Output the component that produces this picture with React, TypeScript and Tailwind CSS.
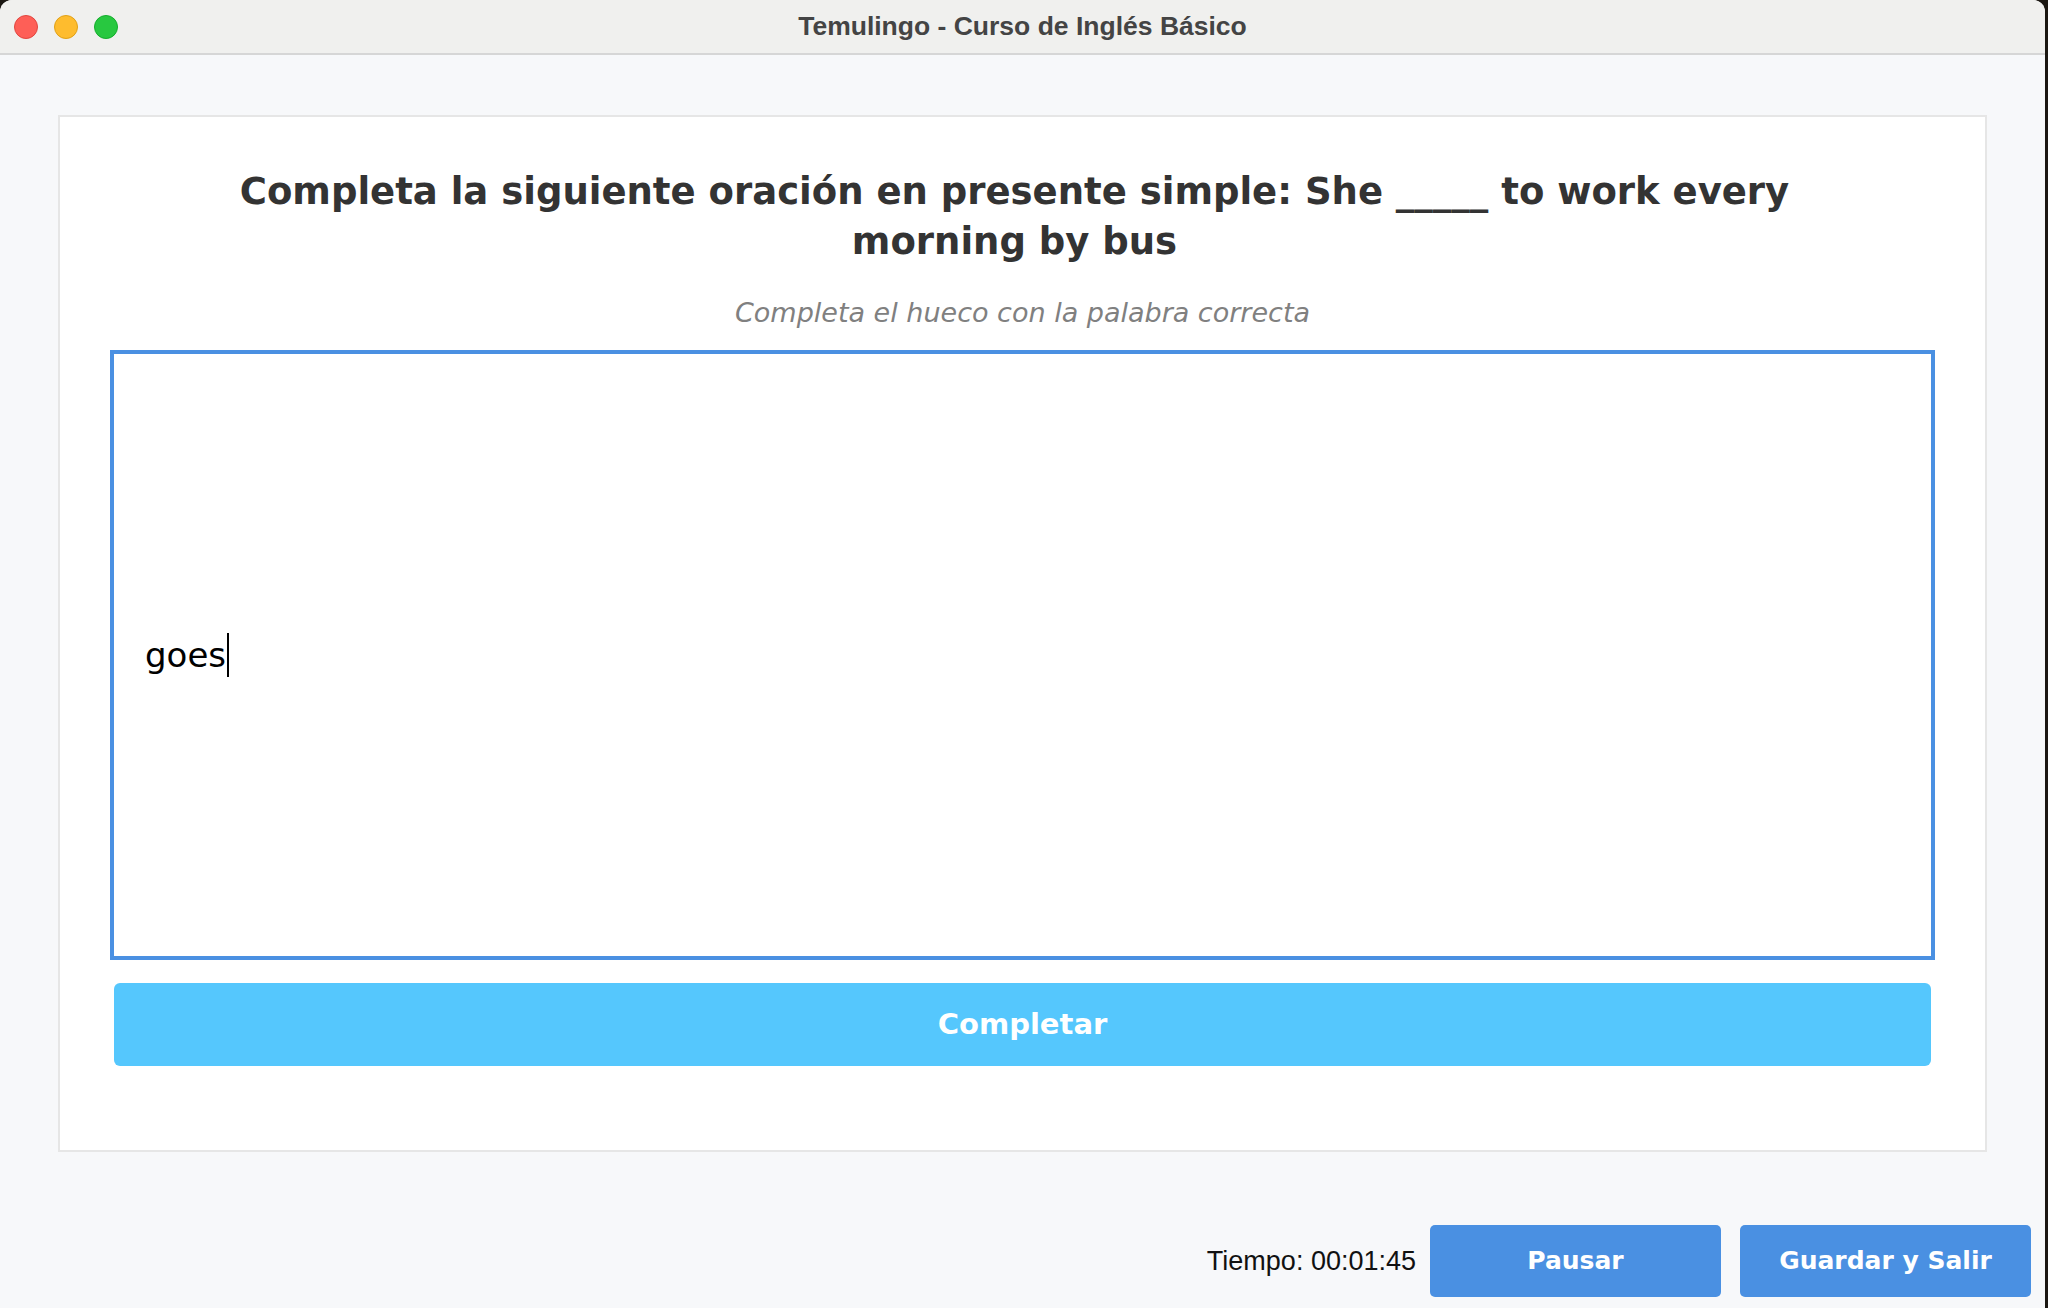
import React from "react";

const dejavu = { fontFamily: '"DejaVu Sans", "Noto Sans", sans-serif' };

function TrafficLights() {
  return (
    <div className="flex items-center gap-[16px] pl-[14px]">
      <span className="size-[24px] rounded-full bg-[#fe5f57] border border-[#e2463f]" />
      <span className="size-[24px] rounded-full bg-[#febc2e] border border-[#e1a116]" />
      <span className="size-[24px] rounded-full bg-[#28c840] border border-[#14ae2c]" />
    </div>
  );
}

export default function App() {
  return (
    <div className="w-[2048px] h-[1308px] bg-[#1b1712] overflow-hidden">
      <div className="w-[2045px] h-[1308px] rounded-t-[12px] overflow-hidden flex flex-col bg-[#f7f8fa]">
        {/* title bar */}
        <div className="relative h-[55px] shrink-0 bg-[#f0f0ee] border-b-2 border-[#d6d6d6] flex items-center">
          <TrafficLights />
          <div
            className="absolute inset-0 flex items-center justify-center text-[26.5px] font-bold text-[#444444]"
            style={{ fontFamily: '"Liberation Sans", Arial, sans-serif' }}
          >
            Temulingo - Curso de Inglés Básico
          </div>
        </div>

        {/* content */}
        <div className="flex-1 flex flex-col px-[58px] pt-[60px]" style={dejavu}>
          <div className="h-[1037px] bg-white border-2 border-[#e6e6e6] flex flex-col px-[50px] pt-[50px]">
            <h1 className="max-w-[1620px] mx-auto pr-[16px] text-center text-[37px] leading-[50px] font-bold text-[#333333]">
              Completa la siguiente oración en presente simple: She _____ to work every morning by bus
            </h1>
            <p className="mt-[29px] text-center text-[27px] leading-[34px] italic text-[#808080]">
              Completa el hueco con la palabra correcta
            </p>

            <div className="mt-[20px] h-[610px] border-[4px] border-[#4a90e2] bg-white flex items-center pl-[31px]">
              <span className="text-[34px] text-black leading-none">goes</span>
              <span className="w-[2px] h-[44px] bg-black ml-[1px]" />
            </div>

            <button className="mt-[23px] mx-[4px] h-[83px] rounded-[6px] bg-[#55c7fd] text-white text-[29px] font-bold">
              Completar
            </button>
          </div>

          {/* footer */}
          <div className="mt-[73px] flex items-center justify-end gap-[19px] -mr-[44px]">
            <span
              className="text-[27px] text-[#111111] mr-[-5px]"
              style={{ fontFamily: '"Liberation Sans", Arial, sans-serif' }}
            >
              Tiempo: 00:01:45
            </span>
            <button className="w-[291px] h-[72px] rounded-[5px] bg-[#4a90e2] text-white text-[25px] font-bold">
              Pausar
            </button>
            <button className="w-[291px] h-[72px] rounded-[5px] bg-[#4a90e2] text-white text-[25px] font-bold">
              Guardar y Salir
            </button>
          </div>
        </div>
      </div>
    </div>
  );
}
